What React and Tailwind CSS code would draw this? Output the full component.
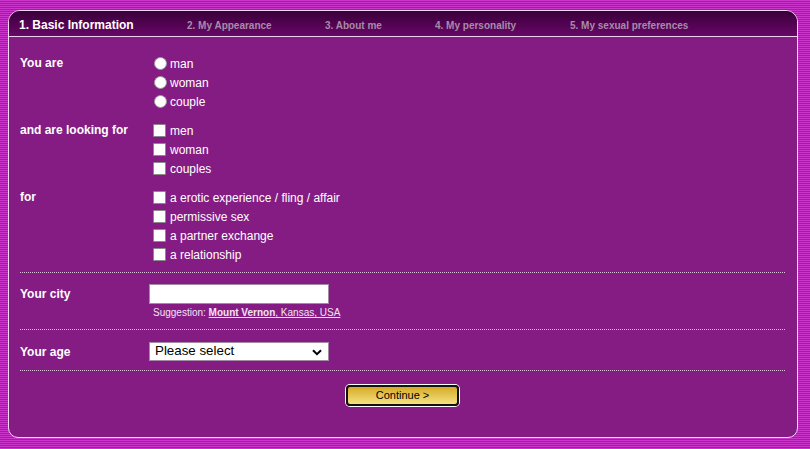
import React from "react";

const font = { fontFamily: '"Liberation Sans", Arial, sans-serif' };

function Radio({ label }) {
  return (
    <label className="flex items-center h-[19px]">
      <input
        type="radio"
        name="you"
        className="appearance-none m-0 ml-[1px] w-[13px] h-[13px] rounded-full bg-white border border-[#9a9a9a] shrink-0"
      />
      <span className="ml-[3px] text-[12px] text-white leading-none">{label}</span>
    </label>
  );
}

function Check({ label }) {
  return (
    <label className="flex items-center h-[19px]">
      <input
        type="checkbox"
        className="appearance-none m-0 w-[13px] h-[13px] rounded-[1px] bg-white border border-[#8a8a8a] shrink-0"
      />
      <span className="ml-[4px] text-[12px] text-white leading-none">{label}</span>
    </label>
  );
}

function Group({ label, children, className = "" }) {
  return (
    <div className={"flex " + className}>
      <div className="w-[129px] shrink-0 text-[12px] font-bold text-white leading-[19px]">{label}</div>
      <div className="pl-[4px] flex flex-col">{children}</div>
    </div>
  );
}

function Dotted({ className = "" }) {
  return <div className={"border-t border-dotted border-[#dcc0dc] " + className} />;
}

export default function App() {
  return (
    <div
      style={font}
      className="w-[810px] h-[449px] overflow-hidden pt-[10px] pl-[8px] bg-[repeating-linear-gradient(to_bottom,#c936c9_0px,#c936c9_1px,#a01fa0_1px,#a01fa0_2px)]"
    >
      <div className="w-[790px] h-[428px] border border-[#f2dcf2] rounded-t-[12px] rounded-b-[10px] overflow-hidden bg-[#841c84] flex flex-col">
        {/* header */}
        <div className="h-[25px] shrink-0 bg-gradient-to-b from-[#3a003a] to-[#680868] flex items-center pt-[3px] pl-[10px]">
          <div className="w-[168px] text-[12px] font-bold text-white">1. Basic Information</div>
          <div className="w-[138px] text-[10px] font-bold text-[#a98ba9]">2. My Appearance</div>
          <div className="w-[110px] text-[10px] font-bold text-[#a98ba9]">3. About me</div>
          <div className="w-[135px] text-[10px] font-bold text-[#a98ba9]">4. My personality</div>
          <div className="text-[10px] font-bold text-[#a98ba9]">5. My sexual preferences</div>
        </div>
        <div className="h-px shrink-0 bg-[#ead2ea]" />

        {/* body */}
        <div className="pl-[11px] pr-[12px] pt-[17px] flex flex-col">
          <Group label="You are">
            <Radio label="man" />
            <Radio label="woman" />
            <Radio label="couple" />
          </Group>
          <Group label="and are looking for" className="mt-[10px]">
            <Check label="men" />
            <Check label="woman" />
            <Check label="couples" />
          </Group>
          <Group label="for" className="mt-[10px]">
            <Check label="a erotic experience / fling / affair" />
            <Check label="permissive sex" />
            <Check label="a partner exchange" />
            <Check label="a relationship" />
          </Group>

          <Dotted className="mt-[8px]" />

          <div className="flex items-center mt-[11px]">
            <div className="w-[129px] shrink-0 text-[12px] font-bold text-white">Your city</div>
            <input
              type="text"
              className="w-[180px] h-[20px] bg-white border border-[#a58aa5] outline-none px-1 text-[13px]"
            />
          </div>
          <div className="pl-[133px] mt-[3px] text-[10px] leading-[12px] text-[#f4e2f4]">
            Suggestion:{" "}
            <span className="underline">
              <span className="font-bold">Mount Vernon</span>, Kansas, USA
            </span>
          </div>

          <Dotted className="mt-[10px]" />

          <div className="flex items-center mt-[11px]">
            <div className="w-[129px] shrink-0 text-[12px] font-bold text-white pt-[2px]">Your age</div>
            <div className="relative w-[180px] h-[19px] bg-white border border-[#a58aa5] flex items-center">
              <span className="pl-[5px] text-[13.33px] text-black leading-none">Please select</span>
              <svg
                className="absolute right-[6px] top-[6px]"
                width="10"
                height="7"
                viewBox="0 0 10 7"
              >
                <path d="M1 1.2 L5 5.2 L9 1.2" fill="none" stroke="#000" strokeWidth="2" />
              </svg>
            </div>
          </div>

          <Dotted className="mt-[9px]" />

          <div className="flex justify-center mt-[14px]">
            <button className="w-[113px] h-[21px] rounded-[4px] border-2 border-[#111] ring-1 ring-white bg-gradient-to-b from-[#d6aa1e] to-[#f4e27e] text-[11px] text-black leading-none">
              Continue &gt;
            </button>
          </div>
        </div>
      </div>
    </div>
  );
}
